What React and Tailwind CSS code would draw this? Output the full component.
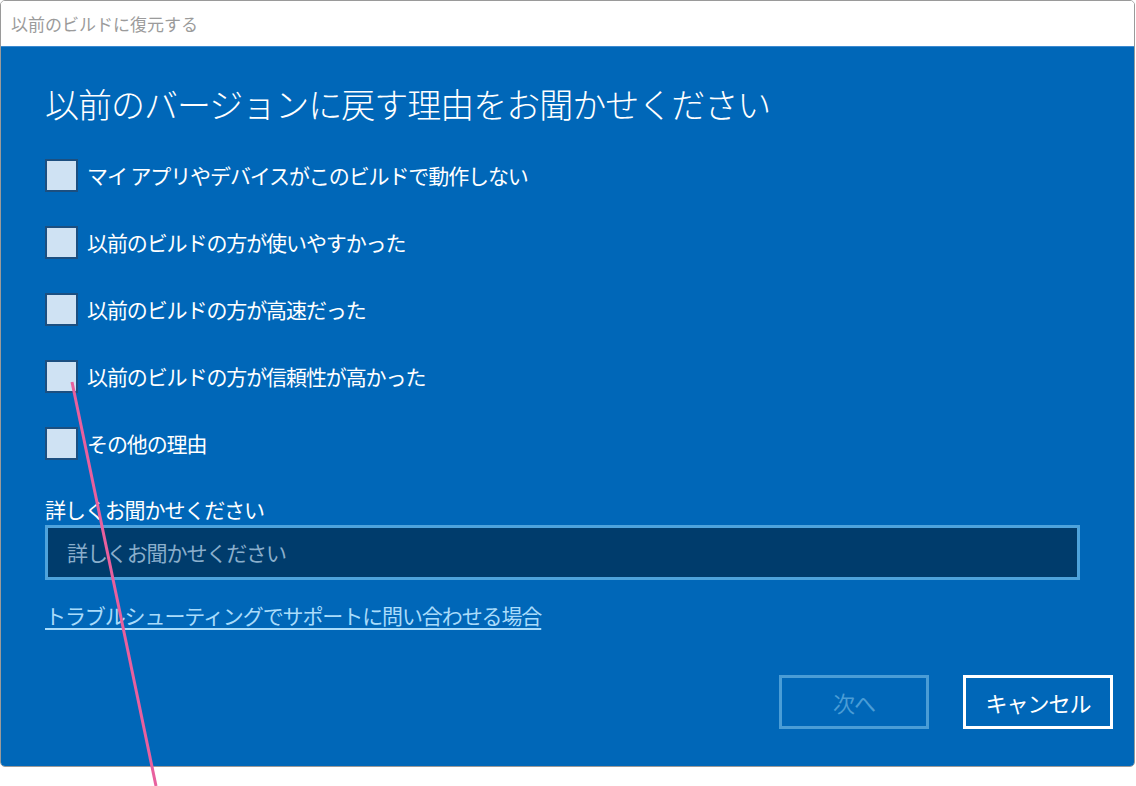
const reasons = [
  "マイ アプリやデバイスがこのビルドで動作しない",
  "以前のビルドの方が使いやすかった",
  "以前のビルドの方が高速だった",
  "以前のビルドの方が信頼性が高かった",
  "その他の理由",
]

export default function App() {
  return (
    <div className="relative w-[1136px] h-[786px] bg-white overflow-hidden" style={{ fontFamily: '"Noto Sans CJK JP", "Noto Sans", sans-serif' }}>
      <div className="w-[1135px] h-[767px] border border-[#9a9a9a] rounded-[5px] overflow-hidden flex flex-col">
        {/* title bar */}
        <div className="h-[45px] bg-white flex items-center px-[10px] text-[17px] text-[#9b9b9b]">
          以前のビルドに復元する
        </div>
        <div className="flex-1 bg-[#0067b8] border-t border-[#3c8ad0] pl-[44px] pr-[54px] flex flex-col">
          <h1 className="mt-[33px] text-[34px] font-light text-white leading-[48px] tracking-[-1px]">
            以前のバージョンに戻す理由をお聞かせください
          </h1>
          <div className="mt-[31px] flex flex-col gap-[35px]">
            {reasons.map((r) => (
              <label key={r} className="flex items-center gap-[9px] h-[32px]">
                <span className="w-[33px] h-[33px] bg-[#cfe2f3] border-2 border-[#1c4f80] shrink-0" />
                <span className="text-[21px] text-white leading-none tracking-[-1.1px]">{r}</span>
              </label>
            ))}
          </div>
          <div className="mt-[35px] text-[21px] text-white leading-[30px] tracking-[-1.1px]">詳しくお聞かせください</div>
          <div className="mt-[1px] h-[55px] bg-[#003c6c] border-[3px] border-[#4ea3dc] flex items-center px-[19px] text-[21px] text-[#8aaecb] tracking-[-1.1px]">
            詳しくお聞かせください
          </div>
          <a className="mt-[20px] self-start text-[21px] text-[#a9dcfb] underline underline-offset-4 leading-[30px] tracking-[-1.1px]">
            トラブルシューティングでサポートに問い合わせる場合
          </a>
          <div className="mt-[45px] flex justify-end gap-[34px] -mr-[33px]">
            <button className="w-[150px] h-[54px] border-[3px] border-[#4a9dd6] text-[22px] text-[#4a9dd6] tracking-[-1px]">次へ</button>
            <button className="w-[150px] h-[54px] border-[3px] border-white text-[22px] text-white tracking-[-1px]">キャンセル</button>
          </div>
        </div>
      </div>
      <svg className="absolute left-0 top-0 pointer-events-none" width="1136" height="786">
        <line x1="72" y1="382" x2="156" y2="786" stroke="#e8609e" strokeWidth="3" />
      </svg>
    </div>
  )
}
